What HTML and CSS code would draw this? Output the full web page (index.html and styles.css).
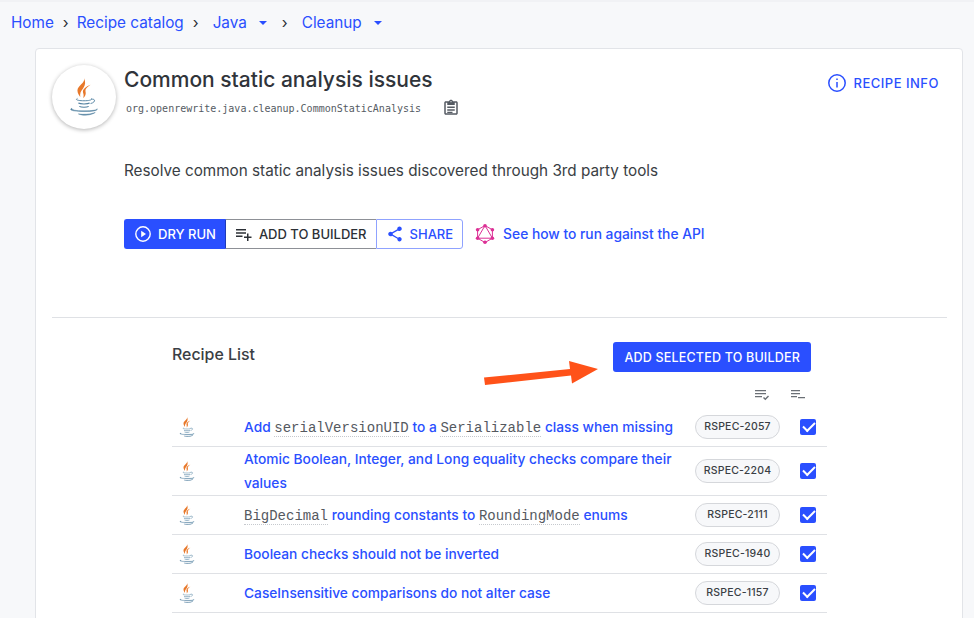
FILE: index.html
```html
<!DOCTYPE html>
<html lang="en">

<head>
    <meta charset="UTF-8">
    <meta name="viewport" content="width=device-width, initial-scale=1.0">
    <title>Common static analysis issues</title>

    <link rel="stylesheet" href="styles.css">
</head>

<body>
    <svg class="defs" width="0" height="0">
        <symbol id="java" viewBox="0 0 32 40">
            <path d="M16 0c1.500 5-7 8-7 13 0 3 2 5 3 7-.5-4 .5-6 3-9 2.500-3.500 3-7 1-11z" fill="#e8782a"/>
            <path d="M23 7c-5 2-9 5-8 8.500.6 2 1 3.500 0 5.500 3.500-2.500 3-5.500 2.500-7.500-.3-2 2.500-4.500 5.500-6.500z" fill="#e8782a"/>
            <path d="M9 21.500c-3 1.500 1 2.500 7 2.500s9-1 8-2.500M24 22.500c4-1 5 3-1 4.500" fill="none" stroke="#5382a1" stroke-width="1"/>
            <path d="M10 26.500c2 1.200 10 1.200 12 0M11 30c2 1.200 8 1.200 10 0" fill="none" stroke="#5382a1" stroke-width="1.200"/>
            <path d="M3 32c-4 2 2 3.500 13 3.500s15-1.500 14-3c0 1.500-5 2.200-14 2.200S3 34 3 32zM10 38c5 1 13 .5 18-1.500-5 3.500-14 3.500-18 1.500z" fill="#5382a1" stroke="#5382a1" stroke-width=".5"/>
        </symbol>
    </svg>

    <nav class="crumbs">
        <a href="#">Home</a>
        <span class="sep">›</span>
        <a href="#">Recipe catalog</a>
        <span class="sep">›</span>
        <a href="#" class="drop">Java <i class="caret"></i></a>
        <span class="sep">›</span>
        <a href="#" class="drop">Cleanup <i class="caret"></i></a>
    </nav>

    <main class="card">
        <header class="head">
            <div class="avatar"><svg width="30" height="38"><use href="#java"/></svg></div>
            <div class="head-text">
                <h1>Common static analysis issues</h1>
                <div class="recipe-id">
                    <code>org.openrewrite.java.cleanup.CommonStaticAnalysis</code>
                    <svg class="clip" width="18" height="18" viewBox="0 0 24 24" fill="#555b63"><path d="M19 3h-4.180C14.400 1.840 13.300 1 12 1s-2.400.84-2.820 2H5c-1.100 0-2 .9-2 2v14c0 1.100.9 2 2 2h14c1.100 0 2-.9 2-2V5c0-1.100-.9-2-2-2zm-7-.25c.41 0 .75.34.75.75s-.34.75-.75.75-.75-.34-.75-.75.34-.75.75-.75zM19 19H5V5h2v3h10V5h2v14zM7 10h10v2H7zm0 3.500h10v2H7zM7 17h7v1.500H7z"/></svg>
                </div>
            </div>
            <a href="#" class="info">
                <svg width="20" height="20" viewBox="0 0 20 20" fill="none" stroke="#2a4fff" stroke-width="1.500"><circle cx="10" cy="10" r="8.200"/><path d="M10 9v5.500M10 5.500v1.600"/></svg>
                RECIPE INFO
            </a>
        </header>

        <p class="desc">Resolve common static analysis issues discovered through 3rd party tools</p>

        <div class="actions">
            <div class="btn-group">
                <button class="btn run">
                    <svg width="18" height="18" viewBox="0 0 18 18"><circle cx="9" cy="9" r="7.200" fill="none" stroke="#fff" stroke-width="1.400"/><path d="M7.200 5.800v6.400l4.800-3.200z" fill="#fff"/></svg>
                    DRY RUN
                </button>
                <button class="btn add">
                    <svg width="18" height="18" viewBox="0 0 18 18" fill="#2c3036"><path d="M1 4h10v1.400H1zM1 7.300h10v1.400H1zM1 10.600h6.500v1.400H1zM12 8.500h1.500v3h3V13h-3v3H12v-3H9v-1.500h3z"/></svg>
                    ADD TO BUILDER
                </button>
                <button class="btn share">
                    <svg width="18" height="18" viewBox="0 0 24 24" fill="#2a4fff"><path d="M18 16.100c-.8 0-1.500.3-2 .8l-7.100-4.200c.1-.2.100-.5.100-.7s0-.5-.1-.7l7-4.100c.6.500 1.300.8 2.100.8 1.700 0 3-1.300 3-3s-1.300-3-3-3-3 1.300-3 3c0 .2 0 .5.100.7l-7 4.100C7.500 9.300 6.800 9 6 9c-1.700 0-3 1.300-3 3s1.300 3 3 3c.8 0 1.500-.3 2.100-.8l7.100 4.200c-.1.200-.1.400-.1.600 0 1.600 1.300 2.900 2.900 2.900s2.900-1.300 2.900-2.900-1.300-2.900-2.900-2.900z"/></svg>
                    SHARE
                </button>
            </div>
            <a href="#" class="api">
                <svg width="22" height="22" viewBox="0 0 22 22" fill="none" stroke="#dc2f95" stroke-width="1"><path d="M11 2.500l7.400 4.300v8.400L11 19.500l-7.400-4.300V6.800zM11 2.500L3.600 15.200h14.800z"/><g fill="#dc2f95" stroke="none"><circle cx="11" cy="2.800" r="1.800"/><circle cx="18.400" cy="6.800" r="1.800"/><circle cx="18.400" cy="15.200" r="1.800"/><circle cx="11" cy="19.300" r="1.800"/><circle cx="3.600" cy="15.200" r="1.800"/><circle cx="3.600" cy="6.800" r="1.800"/></g></svg>
                See how to run against the API
            </a>
        </div>

        <hr class="rule">

        <section class="list">
            <div class="list-top">
                <h2>Recipe List</h2>
                <button class="add-selected">ADD SELECTED TO BUILDER</button>
                <svg class="arrow" width="120" height="26" viewBox="0 0 120 26"><path d="M1 18.500L87 10l-1-8 29 8-26 14.500-1-8L2 26z" fill="#ff5219"/></svg>
            </div>

            <div class="tools">
                <svg width="14" height="12" viewBox="0 0 14 12" fill="#6b7076"><path d="M0 1h11v1.300H0zM0 4h11v1.300H0zM0 7h7v1.300H0zM8 9l1-1 1.300 1.300L13 6.600l1 1-3.700 3.700z"/></svg>
                <svg width="14" height="12" viewBox="0 0 14 12" fill="#6b7076"><path d="M0 1h9v1.300H0zM0 4h9v1.300H0zM0 7h6v1.300H0zM7 8h7v1.300H7z"/></svg>
            </div>

            <div class="row">
                <svg class="logo" width="16" height="20"><use href="#java"/></svg>
                <a href="#" class="name">Add <code>serialVersionUID</code> to a <code>Serializable</code> class when missing</a>
                <span class="chip">RSPEC-2057</span>
                <span class="check"></span>
            </div>
            <div class="row">
                <svg class="logo" width="16" height="20"><use href="#java"/></svg>
                <a href="#" class="name">Atomic Boolean, Integer, and Long equality checks compare their values</a>
                <span class="chip">RSPEC-2204</span>
                <span class="check"></span>
            </div>
            <div class="row">
                <svg class="logo" width="16" height="20"><use href="#java"/></svg>
                <a href="#" class="name"><code>BigDecimal</code> rounding constants to <code>RoundingMode</code> enums</a>
                <span class="chip">RSPEC-2111</span>
                <span class="check"></span>
            </div>
            <div class="row">
                <svg class="logo" width="16" height="20"><use href="#java"/></svg>
                <a href="#" class="name">Boolean checks should not be inverted</a>
                <span class="chip">RSPEC-1940</span>
                <span class="check"></span>
            </div>
            <div class="row">
                <svg class="logo" width="16" height="20"><use href="#java"/></svg>
                <a href="#" class="name">CaseInsensitive comparisons do not alter case</a>
                <span class="chip">RSPEC-1157</span>
                <span class="check"></span>
            </div>
        </section>
    </main>
</body>

</html>
```

FILE: styles.css
```css
* {
    box-sizing: border-box;
}

html, body {
    height: 618px;
    overflow: hidden;
}

body {
    margin: 0;
    background-color: #f7f8fa;
    border-top: 2px solid #f1f2f5;
    font-family: Inter, sans-serif;
    color: #2c3036;
}

a {
    color: #2a4fff;
    text-decoration: none;
}

.defs {
    position: absolute;
}

.crumbs {
    display: flex;
    align-items: center;
    height: 41px;
    padding: 0 0 0 11px;
    font-size: 15.300px;
}

.crumbs .sep {
    margin: 0 8px 0 9px;
    color: #2c3036;
}

.drop {
    display: flex;
    align-items: center;
    margin: 0 6px 0 6px;
}

.caret {
    margin-left: 12px;
    border: 4px solid transparent;
    border-top: 4px solid #2a4fff;
    border-bottom: 0;
}

.card {
    margin: 5px 11px 0 35px;
    height: 620px;
    padding: 16px 15px 16px 16px;
    background-color: #fff;
    border: 1px solid #e2e4e8;
    border-radius: 4px;
}

.head {
    display: flex;
    align-items: flex-start;
}

.avatar {
    display: flex;
    align-items: center;
    justify-content: center;
    flex: none;
    width: 64px;
    height: 64px;
    border-radius: 50%;
    box-shadow: 0 1px 4px rgba(0, 0, 0, 0.3);
}

.head-text {
    margin-left: 8px;
    flex: 1;
}

h1 {
    margin: 1px 0 0 0;
    font-size: 21px;
    font-weight: 500;
    line-height: 28px;
    color: #30343a;
}

.recipe-id {
    display: flex;
    align-items: center;
    margin-top: 5px;
}

.recipe-id code {
    margin-left: 2px;
    font-family: "DejaVu Sans Mono", monospace;
    font-size: 10px;
    color: #555b63;
}

.clip {
    margin-left: 21px;
}

.info {
    display: flex;
    align-items: center;
    gap: 7px;
    margin: 8px 8px 0 0;
    font-size: 13px;
    font-weight: 500;
    letter-spacing: 0.5px;
}

.desc {
    margin: 31px 0 0 72px;
    font-size: 15.280px;
    line-height: 22px;
    color: #3a3e44;
}

.actions {
    display: flex;
    align-items: center;
    margin: 37px 0 0 72px;
}

.btn-group {
    display: flex;
    height: 30px;
}

.btn {
    display: flex;
    align-items: center;
    gap: 6px;
    height: 30px;
    padding: 0 9px;
    background: #fff;
    border: 1px solid #8d9096;
    font-family: Inter, sans-serif;
    font-size: 13px;
    font-weight: 500;
}

.run {
    background-color: #2a4fff;
    border-color: #2a4fff;
    border-right-color: #1f3bb8;
    border-radius: 3px 0 0 3px;
    color: #fff;
}

.add {
    border-left: 0;
    border-right: 0;
    color: #2c3036;
}

.share {
    border-color: #8fa2ff;
    border-radius: 0 3px 3px 0;
    color: #2a4fff;
}

.api {
    display: flex;
    align-items: center;
    gap: 7px;
    margin-left: 11px;
    font-size: 13.800px;
    font-weight: 500;
}

.rule {
    margin: 68px 0 0 0;
    border: 0;
    border-top: 1px solid #dfe1e5;
}

.list {
    width: 655px;
    margin-left: 120px;
}

.list-top {
    position: relative;
    display: flex;
    justify-content: space-between;
    align-items: flex-start;
    padding: 24px 16px 0 0;
}

h2 {
    margin: 3px 0 0 0;
    font-size: 15.900px;
    font-weight: 500;
    line-height: 20px;
    color: #3a3e44;
}

.add-selected {
    height: 30px;
    padding: 0 11px;
    background-color: #2a4fff;
    border: 0;
    border-radius: 3px;
    font-family: Inter, sans-serif;
    font-size: 12.500px;
    font-weight: 500;
    letter-spacing: 0.2px;
    color: #fff;
}

.arrow {
    position: absolute;
    left: 311px;
    top: 41px;
}

.tools {
    display: flex;
    justify-content: flex-end;
    gap: 22px;
    height: 36px;
    padding: 17px 22px 0 0;
}

.row {
    display: flex;
    align-items: center;
    min-height: 39px;
    border-bottom: 1px solid #dfe1e5;
}

.logo {
    flex: none;
    margin-left: 7px;
}

.name {
    flex: 1;
    margin-left: 49px;
    font-size: 13.750px;
    font-weight: 500;
    line-height: 24px;
}

.name code {
    border-bottom: 1px dotted #c6c9ce;
    font-family: "Liberation Mono", monospace;
    font-size: 14px;
    font-weight: 400;
    color: #55595f;
}

.chip {
    flex: none;
    width: 85px;
    height: 24px;
    margin-left: 16px;
    background-color: #f7f8fa;
    border: 1px solid #d5d7db;
    border-radius: 12px;
    font-size: 10.500px;
    font-weight: 500;
    line-height: 22px;
    letter-spacing: 0.2px;
    text-align: center;
    color: #3a3e44;
}

.check {
    position: relative;
    flex: none;
    width: 16px;
    height: 16px;
    margin: 0 11px 0 20px;
    background-color: #2a4fff;
    border-radius: 2px;
}

.check::after {
    content: "";
    position: absolute;
    left: 3px;
    top: 3px;
    width: 10px;
    height: 5px;
    border-left: 2px solid #fff;
    border-bottom: 2px solid #fff;
    transform: rotate(-45deg);
}
```
